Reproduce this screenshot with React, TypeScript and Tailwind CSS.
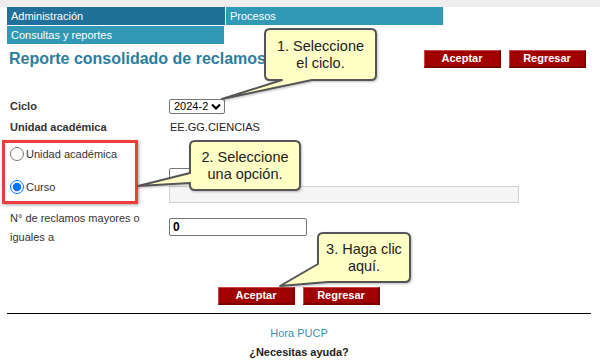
import React from "react";

const font = "font-['Liberation_Sans',Arial,sans-serif]";

function RedButton({ label }: { label: string }) {
  return (
    <div className="w-[77px] h-[18px] bg-[#a10000] border-t border-l border-[#c94848] border-r-2 border-b-2 border-r-[#7c0000] border-b-[#7c0000] text-white text-[11px] font-bold leading-[15px] text-center">
      {label}
    </div>
  );
}

function Callout({ className, lines }: { className: string; lines: string[] }) {
  return (
    <div className={`absolute flex flex-col items-center justify-center text-[14.5px] leading-[17px] text-[#222] ${className}`}>
      {lines.map((l) => (
        <span key={l}>{l}</span>
      ))}
    </div>
  );
}

export default function App() {
  return (
    <div className={`relative w-[600px] h-[362px] overflow-hidden bg-white text-[#333] ${font}`}>
      {/* franja superior */}
      <div className="h-[7px] bg-[#eeeeee]" />

      <div className="ml-[7px] w-[584px]">
        {/* menú */}
        <div className="flex gap-px h-[18px] text-white text-[11px] leading-[18px]">
          <div className="w-[218px] bg-[#21709a] pl-[4px]">Administración</div>
          <div className="w-[217px] bg-[#3198b6] pl-[4px]">Procesos</div>
        </div>
        <div className="mt-px h-[18px] w-[217px] bg-[#3198b6] pl-[4px] text-white text-[11px] leading-[18px]">
          Consultas y reportes
        </div>

        {/* título + botones */}
        <div className="mt-[4px] h-[22px] flex items-center justify-between pr-[5px]">
          <h1 className="pl-[2px] text-[16px] font-bold text-[#2b7d9d] leading-[20px]">
            Reporte consolidado de reclamos
          </h1>
          <div className="flex gap-[8px]">
            <RedButton label="Aceptar" />
            <RedButton label="Regresar" />
          </div>
        </div>

        {/* ciclo */}
        <div className="mt-[27px] h-[18px] flex items-center">
          <div className="w-[162px] pl-[3px] text-[11px] font-bold">Ciclo</div>
          <div className="w-[56px] h-[15px] border border-[#767676] rounded-[2px] flex items-center justify-between pl-[4px] pr-[3px] text-[11px] text-black">
            <span>2024-2</span>
            <svg width="10" height="7" viewBox="0 0 10 7">
              <polyline points="1,1.5 5,5.5 9,1.5" fill="none" stroke="#000" strokeWidth="2.2" />
            </svg>
          </div>
        </div>

        {/* unidad académica */}
        <div className="mt-[3px] h-[18px] flex items-center">
          <div className="w-[162px] pl-[3px] text-[11px] font-bold">Unidad académica</div>
          <div className="pl-[1px] text-[11px] text-[#222]">EE.GG.CIENCIAS</div>
        </div>

        {/* opciones */}
        <div className="mt-[4px] h-[64px] flex">
          <div className="w-[162px] flex flex-col pt-[7px] gap-[19px] text-[11px]">
            <label className="flex items-center gap-[2px] h-[14px]">
              <input type="radio" name="op" className="m-0 ml-[3px] w-[14px] h-[14px]" />
              <span>Unidad académica</span>
            </label>
            <label className="flex items-center gap-[2px] h-[14px]">
              <input type="radio" name="op" defaultChecked className="m-0 ml-[3px] w-[14px] h-[14px]" />
              <span>Curso</span>
            </label>
          </div>
          <div className="pt-[28px] flex flex-col gap-[2px]">
            <div className="w-[92px] h-[16px] border border-[#767676] rounded-[2px] bg-white" />
            <div className="w-[350px] h-[17px] border border-[#d0d0d0] bg-[#f5f5f5]" />
          </div>
        </div>

        {/* N° de reclamos */}
        <div className="mt-[5px] flex">
          <div className="w-[162px] pl-[3px] text-[11px] leading-[19px] text-[#333]">
            N° de reclamos mayores o
            <br />
            iguales a
          </div>
          <div className="mt-[9px] w-[138px] h-[18px] border border-[#767676] rounded-[2px] pl-[3px] text-[12px] leading-[16px] font-bold text-black">
            0
          </div>
        </div>

        {/* botones inferiores */}
        <div className="mt-[40px] flex justify-center gap-[8px]">
          <RedButton label="Aceptar" />
          <RedButton label="Regresar" />
        </div>

        <div className="mt-[8px] h-px bg-black" />

        <div className="mt-[12px] text-center text-[11px] leading-[14px] text-[#3a8fb7]">Hora PUCP</div>
        <div className="mt-[5px] text-center text-[11px] leading-[14px] font-bold text-[#222]">¿Necesitas ayuda?</div>
      </div>

      {/* resaltado rojo */}
      <div className="absolute left-[2px] top-[140px] w-[136px] h-[64px] border-[3px] border-[#ef3c3c] shadow-[1px_1px_3px_rgba(0,0,0,0.35)] pointer-events-none" />

      {/* globos */}
      <svg className="absolute left-0 top-0 pointer-events-none" width="600" height="362" viewBox="0 0 600 362">
        <defs>
          <filter id="sh" x="-10%" y="-10%" width="130%" height="130%">
            <feDropShadow dx="1" dy="1" stdDeviation="1" floodColor="#000" floodOpacity="0.25" />
          </filter>
        </defs>
        <g fill="#ffffc6" stroke="#555" strokeWidth="2" strokeLinejoin="round" filter="url(#sh)">
          <path d="M270,29 H371 Q376,29 376,34 V75 Q376,80 371,80 H312 L222,99 L282,80 H270 Q265,80 265,75 V34 Q265,29 270,29 Z" />
          <path d="M195,141 H295 Q300,141 300,146 V185 Q300,190 295,190 H195 Q190,190 190,185 V183 L138,186 L190,173 V146 Q190,141 195,141 Z" />
          <path d="M323,233 H405 Q410,233 410,238 V277 Q410,282 405,282 H328 L280,286 L318,264 V238 Q318,233 323,233 Z" />
        </g>
      </svg>

      <Callout className="left-[265px] top-[29px] w-[111px] h-[51px]" lines={["1. Seleccione", "el ciclo."]} />
      <Callout className="left-[190px] top-[141px] w-[110px] h-[49px]" lines={["2. Seleccione", "una opción."]} />
      <Callout className="left-[318px] top-[233px] w-[92px] h-[49px]" lines={["3. Haga clic", "aquí."]} />
    </div>
  );
}
